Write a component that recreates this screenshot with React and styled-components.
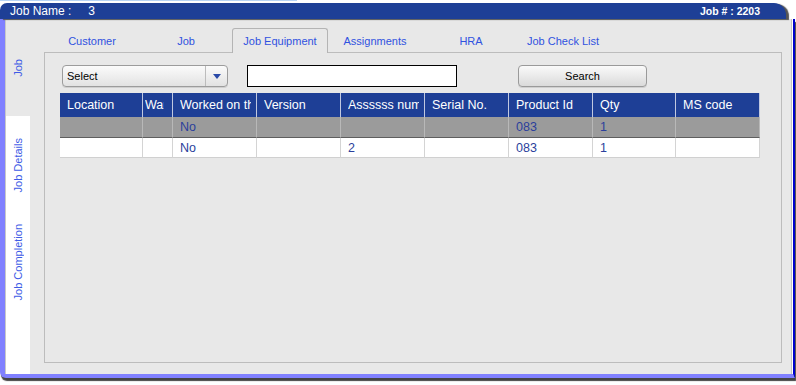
import React from 'react';
import styled, { createGlobalStyle } from 'styled-components';

const Global = createGlobalStyle`
  html, body { margin: 0; padding: 0; background: #ffffff; }
  body {
    font-family: "Liberation Sans", Arial, sans-serif;
    width: 796px;
    height: 385px;
    overflow: hidden;
  }
  * { box-sizing: border-box; }
`;

const Page = styled.div`
  width: 796px;
  height: 385px;
  display: flex;
  flex-direction: column;
`;

const TopStrip = styled.div`
  height: 3px;
  display: flex;
  align-items: flex-start;
`;

const StripLine = styled.div`
  width: 297px;
  height: 1px;
  background: #b8d4f4;
`;

const TitleBar = styled.div`
  width: 786px;
  height: 16px;
  background: #1e3f96;
  border-radius: 7px 12px 0 0;
  display: flex;
  align-items: center;
  justify-content: space-between;
  padding: 0 26px 0 10px;
  box-shadow: 3px 1px 1px #555;
  color: #ffffff;
  position: relative;
  z-index: 2;
`;

const TitleLeft = styled.div`
  font-size: 12px;
  display: flex;
  align-items: center;
`;

const TitleValue = styled.span`
  margin-left: 17px;
`;

const JobNumber = styled.div`
  font-size: 10.5px;
  font-weight: bold;
`;

const Body = styled.div`
  box-sizing: content-box;
  width: 788px;
  height: 355px;
  display: flex;
  background: #e8e8e8;
  border-left: 5px solid #8080ff;
  border-bottom: 4px solid #8080ff;
  border-right: 2px solid #0000cc;
  border-bottom-left-radius: 6px;
  box-shadow: 1px 3px 1px #444;
`;

const SideColumn = styled.div`
  width: 25px;
  background: #ffffff;
  border-left: 1px solid #c8c8c8;
  display: flex;
  flex-direction: column;
`;

const SideTab = styled.div`
  height: 97px;
  display: flex;
  align-items: center;
  justify-content: center;
  background: ${p => (p.$active ? '#e8e8e8' : 'transparent')};
  border-top: 1px solid ${p => (p.$active ? '#c8c8c8' : 'transparent')};
`;

const SideLabel = styled.span`
  writing-mode: vertical-rl;
  transform: rotate(180deg);
  font-size: 11px;
  color: #3d5be6;
  white-space: nowrap;
`;

const Main = styled.div`
  flex: 1;
  display: flex;
  flex-direction: column;
  padding: 9px 11px 11px 14px;
  box-shadow: inset -1px 0 0 #ffffff, inset -2px 0 0 #c4c4c4;
`;

const TabRow = styled.div`
  display: flex;
  align-items: flex-start;
  height: 24px;
  position: relative;
  z-index: 1;
`;

const Tab = styled.div`
  width: ${p => p.$w}px;
  height: ${p => (p.$active ? 25 : 24)}px;
  margin-bottom: ${p => (p.$active ? -1 : 0)}px;
  display: flex;
  align-items: center;
  justify-content: center;
  padding-bottom: ${p => (p.$active ? 1 : 0)}px;
  font-size: 11px;
  color: #3052e0;
  background: #e8e8e8;
  border: 1px solid ${p => (p.$active ? '#b4b4b4' : 'transparent')};
  border-bottom: none;
  border-radius: 3px 3px 0 0;
  white-space: nowrap;
`;

const Panel = styled.div`
  flex: 1;
  border: 1px solid #bcbcbc;
  padding: 12px 0 0 15px;
  display: flex;
  flex-direction: column;
  gap: 6px;
`;

const Toolbar = styled.div`
  display: flex;
  align-items: center;
  height: 22px;
`;

const SelectBox = styled.div`
  width: 166px;
  height: 22px;
  margin-left: 2px;
  border: 1px solid #9c9c9c;
  border-radius: 4px;
  background: linear-gradient(#fbfbfb, #e2e2e2);
  display: flex;
  box-shadow: 0 1px 0 #cfcfcf;
`;

const SelectText = styled.div`
  flex: 1;
  padding-left: 4px;
  font-size: 11px;
  line-height: 20px;
  color: #000;
`;

const SelectArrow = styled.div`
  width: 22px;
  border-left: 1px solid #bcbcbc;
  display: flex;
  align-items: center;
  justify-content: center;
`;

const SearchInput = styled.input`
  width: 210px;
  height: 22px;
  margin: 0 0 0 19px;
  border: 1px solid #000;
  background: #fff;
  padding: 0 4px;
  font-family: "Liberation Sans", Arial, sans-serif;
  font-size: 11px;
  outline: none;
`;

const SearchButton = styled.button`
  width: 129px;
  height: 22px;
  margin-left: 61px;
  border: 1px solid #9a9a9a;
  border-radius: 4px;
  background: linear-gradient(#fafafa, #dadada);
  font-family: "Liberation Sans", Arial, sans-serif;
  font-size: 11px;
  color: #000;
  padding: 0;
  box-shadow: 0 1px 0 #cfcfcf;
`;

const Grid = styled.div`
  width: 700px;
  display: grid;
  grid-template-columns: 83px 30px 84px 84px 84px 84px 84px 83px 84px;
`;

const HeadCell = styled.div`
  height: 24px;
  background: #1e3f96;
  color: #ffffff;
  font-size: 12.5px;
  line-height: 24px;
  padding: 0 ${p => (p.$tight ? 8 : 5)}px 0 ${p => (p.$tight ? 2 : 7)}px;
  border-right: 1px solid #c0c8e0;
  min-width: 0;
`;

const Clip = styled.span`
  display: block;
  overflow: hidden;
  white-space: nowrap;
`;

const Cell = styled.div`
  height: ${p => (p.$shade ? 21 : 20)}px;
  background: ${p => (p.$shade ? '#9b9b9b' : '#ffffff')};
  color: #2b3f9c;
  font-size: 12.5px;
  line-height: 20px;
  padding: 0 5px 0 7px;
  white-space: nowrap;
  overflow: hidden;
  border-right: 1px solid ${p => (p.$shade ? '#b8b8b8' : '#d4d4d4')};
  border-bottom: 1px solid ${p => (p.$shade ? '#5e5e5e' : '#d0d0d0')};
`;

const headers = [
  'Location',
  'Warranty',
  'Worked on the job',
  'Version',
  'Assssss number',
  'Serial No.',
  'Product Id',
  'Qty',
  'MS code',
];

const rows = [
  ['', '', 'No', '', '', '', '083', '1', ''],
  ['', '', 'No', '', '2', '', '083', '1', ''],
];

const tabs = [
  { label: 'Customer', w: 96 },
  { label: 'Job', w: 92 },
  { label: 'Job Equipment', w: 96, active: true },
  { label: 'Assignments', w: 94 },
  { label: 'HRA', w: 98 },
  { label: 'Job Check List', w: 86 },
];

export default function App() {
  return (
    <Page>
      <Global />
      <TopStrip>
        <StripLine />
      </TopStrip>
      <TitleBar>
        <TitleLeft>
          Job Name :<TitleValue>3</TitleValue>
        </TitleLeft>
        <JobNumber>Job # : 2203</JobNumber>
      </TitleBar>
      <Body>
        <SideColumn>
          <SideTab $active>
            <SideLabel>Job</SideLabel>
          </SideTab>
          <SideTab>
            <SideLabel>Job Details</SideLabel>
          </SideTab>
          <SideTab>
            <SideLabel>Job Completion</SideLabel>
          </SideTab>
        </SideColumn>
        <Main>
          <TabRow>
            {tabs.map(t => (
              <Tab key={t.label} $w={t.w} $active={t.active}>
                {t.label}
              </Tab>
            ))}
          </TabRow>
          <Panel>
            <Toolbar>
              <SelectBox>
                <SelectText>Select</SelectText>
                <SelectArrow>
                  <svg width="8" height="5" viewBox="0 0 8 5">
                    <path d="M0 0 H8 L4 5 Z" fill="#2a4aa8" />
                  </svg>
                </SelectArrow>
              </SelectBox>
              <SearchInput defaultValue="" />
              <SearchButton>Search</SearchButton>
            </Toolbar>
            <Grid>
              {headers.map((h, i) => (
                <HeadCell key={h} $tight={i === 1}>
                  <Clip>{h}</Clip>
                </HeadCell>
              ))}
              {rows.map((r, ri) =>
                r.map((c, ci) => (
                  <Cell key={`${ri}-${ci}`} $shade={ri === 0}>
                    {c}
                  </Cell>
                ))
              )}
            </Grid>
          </Panel>
        </Main>
      </Body>
    </Page>
  );
}
